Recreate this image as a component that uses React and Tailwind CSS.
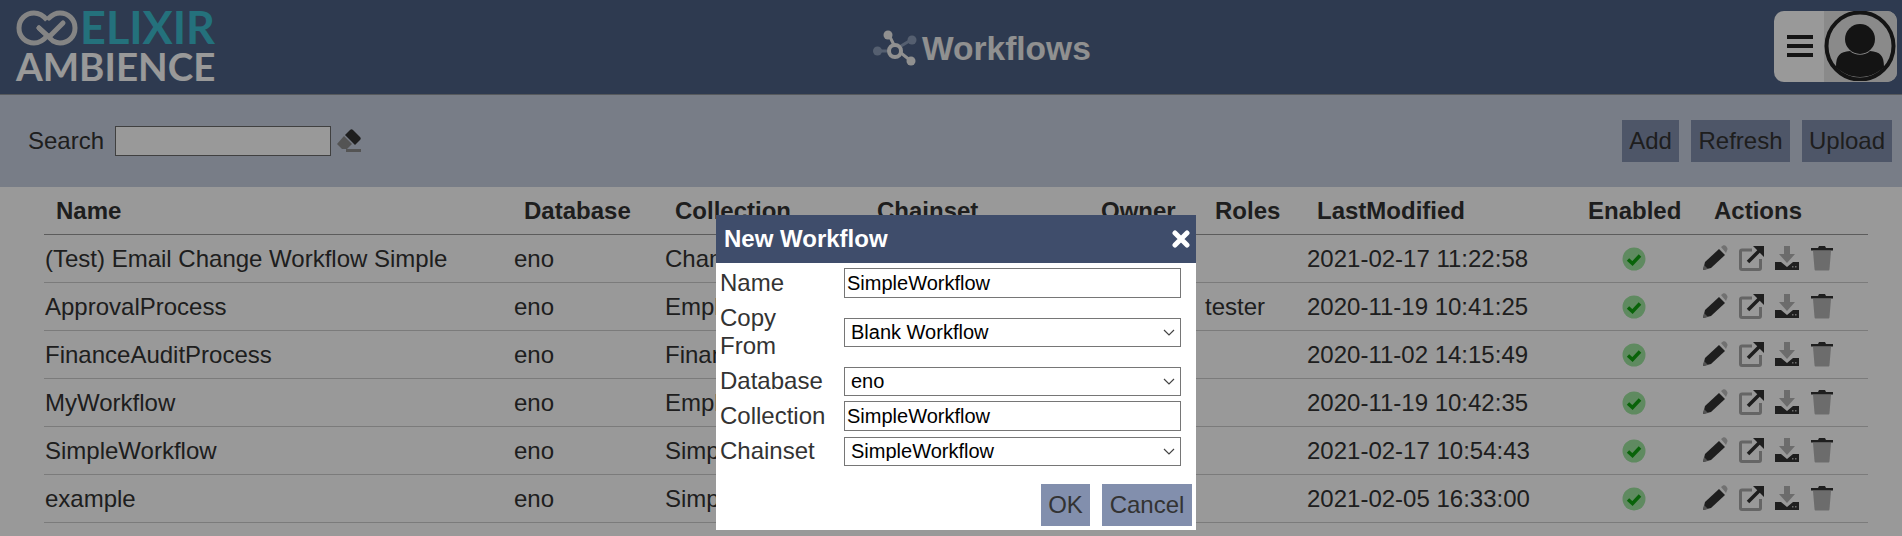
const workflows = [
  { name: "(Test) Email Change Workflow Simple", collection: "ChangeRequests", roles: "", modified: "2021-02-17 11:22:58" },
  { name: "ApprovalProcess", collection: "Employees", roles: "tester", modified: "2020-11-19 10:41:25" },
  { name: "FinanceAuditProcess", collection: "FinanceAudit", roles: "", modified: "2020-11-02 14:15:49" },
  { name: "MyWorkflow", collection: "Employees", roles: "", modified: "2020-11-19 10:42:35" },
  { name: "SimpleWorkflow", collection: "SimpleWorkflow", roles: "", modified: "2021-02-17 10:54:43" },
  { name: "example", collection: "SimpleWorkflow", roles: "", modified: "2021-02-05 16:33:00" },
]

function Logo() {
  return (
    <div className="flex flex-col pl-[16px] pt-[7px]">
      <div className="flex items-center h-[41px]">
        <svg width="62" height="38" viewBox="0 0 62 38" fill="none" stroke="#dcdcdc" strokeWidth="5">
          <path d="M31 11 C27 6 23 4 18 4 C10 4 3 10 3 19 C3 28 10 34 18 34 C23 34 27 32 31 27" />
          <path d="M23 19 L37 32 C39 33 41 34 44 34 C52 34 59 28 59 19 C59 10 52 4 44 4 C39 4 35 7 33 9" strokeLinecap="round" />
          <path d="M23 19 L33 28 L47 14" strokeLinecap="round" strokeLinejoin="round" />
        </svg>
        <span className="font-['Lato'] font-bold text-[45px] leading-none text-[#3cbccf] ml-[2px]">ELIXIR</span>
      </div>
      <span className="font-['Lato'] font-bold text-[38.5px] leading-none text-white -mt-[1px]">AMBIENCE</span>
    </div>
  )
}

function WorkflowIcon() {
  return (
    <svg width="46" height="38" viewBox="0 0 46 38" fill="none">
      <path d="M16 5 L23 19 L38 31" stroke="#f0f0f0" strokeWidth="3" />
      <path d="M6 21 H16 M28 16 L38 10" stroke="#8e9fbb" strokeWidth="3" />
      <circle cx="15" cy="5" r="4.5" fill="#f0f0f0" />
      <circle cx="38" cy="31" r="4.5" fill="#f0f0f0" />
      <circle cx="4.5" cy="21" r="4.5" fill="#8e9fbb" />
      <circle cx="39" cy="10" r="4.5" fill="#8e9fbb" />
      <circle cx="22" cy="21" r="6" stroke="#f0f0f0" strokeWidth="4" fill="#4e6285" />
    </svg>
  )
}

function Avatar() {
  return (
    <svg width="72" height="70" viewBox="0 0 72 70">
      <circle cx="36" cy="35" r="33.5" fill="#e6e6e6" stroke="#222" strokeWidth="4" />
      <circle cx="36" cy="28" r="15" fill="#222" />
      <path d="M12 56 C12 44 16 41 26 40 C31 45 41 45 46 40 C56 41 60 44 60 56 C54 62 46 66 36 66 C26 66 18 62 12 56 Z" fill="#222" />
    </svg>
  )
}

function Eraser() {
  return (
    <svg width="26" height="24" viewBox="0 0 26 24">
      <path d="M8 7 L16 15 L11 20 L6 20 L1 15 Z" fill="#8c8c8c" />
      <path d="M9 6 L14 1 C15 0 16 0 17 1 L24 8 C25 9 25 10 24 11 L19 16 Z" fill="#333" />
      <rect x="10" y="20" width="15" height="3" fill="#8c8c8c" />
    </svg>
  )
}

function EnabledIcon() {
  return (
    <svg width="24" height="24" viewBox="0 0 24 24">
      <circle cx="12" cy="12" r="11.5" fill="#9fe6a0" />
      <path d="M6 12.5 L10.5 16.5 L18 8.5" fill="none" stroke="#0fa60f" strokeWidth="3.5" />
    </svg>
  )
}

function ActionIcons() {
  return (
    <div className="flex items-center -mt-[2px]">
      <svg width="26" height="26" viewBox="0 0 26 26">
        <path d="M1 25 L3 17 L17 4 L23 10 L9 23 Z" fill="#333" />
        <path d="M19 2 L21 0.5 C22 0 23 0 24 1 L25 2.5 C25.7 3.5 25.7 4.5 25 5.5 L24 8 Z" fill="#bdbdbd" />
        <path d="M1 25 L2 20 L6 24 Z" fill="#8c8c8c" />
      </svg>
      <svg className="ml-[11px]" width="26" height="26" viewBox="0 0 26 26" fill="none">
        <path d="M13 5 H3 C2 5 1.5 5.5 1.5 6.5 V23 C1.5 24 2 24.5 3 24.5 H20 C21 24.5 21.5 24 21.5 23 V14" stroke="#a8a8a8" strokeWidth="3" />
        <path d="M9 17 L23 3" stroke="#333" strokeWidth="3.5" />
        <path d="M14 1 H25 V12 Z" fill="#333" />
      </svg>
      <svg className="ml-[9px]" width="26" height="26" viewBox="0 0 26 26">
        <path d="M10 1 H16 V9 H21 L13 18 L5 9 H10 Z" fill="#b5b5b5" />
        <path d="M1 17 H7 L13 22 L19 17 H25 V25 H1 Z" fill="#333" />
        <rect x="18" y="21" width="1.5" height="1.5" fill="#b5b5b5" />
        <rect x="21" y="21" width="1.5" height="1.5" fill="#b5b5b5" />
      </svg>
      <svg className="ml-[10px]" width="24" height="26" viewBox="0 0 24 26">
        <path d="M3 6 H21 L19.5 24 C19.4 25 19 25.5 18 25.5 H6 C5 25.5 4.6 25 4.5 24 Z" fill="#b5b5b5" />
        <path d="M1 3 H8 L9 1 H15 L16 3 H23 V5.5 H1 Z" fill="#333" />
      </svg>
    </div>
  )
}

function ModalField({ label, className, children }) {
  return (
    <div className={"flex items-center " + className}>
      <label className="w-[124px] shrink-0 leading-[28px]">{label}</label>
      {children}
    </div>
  )
}

function ModalSelect({ value }) {
  return (
    <div className="relative w-[337px]">
      <select defaultValue={value} className="block appearance-none w-full h-[29px] border border-[#767676] bg-white text-black text-[20px] leading-none pl-[6px]">
        <option>{value}</option>
      </select>
      <svg className="absolute right-[6px] top-[11px]" width="12" height="8" viewBox="0 0 12 8" fill="none" stroke="#444" strokeWidth="1.2">
        <path d="M1 1 L6 6 L11 1" />
      </svg>
    </div>
  )
}

export default function App() {
  return (
    <div className="relative h-[536px] w-[1902px] overflow-hidden bg-white text-[24px] text-[#333] font-['Liberation_Sans',sans-serif]">
      <header className="relative flex items-start justify-between h-[95px] bg-[#4e6285] border-b border-[#8f949c]">
        <Logo />
        <div className="absolute left-[873px] top-[30px] flex items-center">
          <WorkflowIcon />
          <span className="font-bold text-[33.5px] leading-[38px] text-[#f0f0f0] ml-[3px]">Workflows</span>
        </div>
        <div className="flex mt-[11px] mr-[5px] w-[123px] h-[71px] rounded-[10px] overflow-hidden bg-white">
          <div className="flex flex-col gap-[5px] items-start w-[50px] pl-[13px] pt-[24px]">
            <span className="block w-[26px] h-[4px] bg-[#222]" />
            <span className="block w-[26px] h-[4px] bg-[#222]" />
            <span className="block w-[26px] h-[4px] bg-[#222]" />
          </div>
          <div className="bg-[#e6e6e6] flex-1">
            <Avatar />
          </div>
        </div>
      </header>

      <div className="flex items-center justify-between h-[92px] bg-[#c8d0e1] pl-[28px] pr-[10px]">
        <div className="flex items-center">
          <span>Search</span>
          <input className="ml-[11px] w-[216px] h-[30px] border border-[#6b6b6b] bg-white" />
          <span className="ml-[5px]">
            <Eraser />
          </span>
        </div>
        <div className="flex gap-[12px]">
          <button className="h-[42px] w-[57px] bg-[#828fad]">Add</button>
          <button className="h-[42px] w-[99px] bg-[#828fad]">Refresh</button>
          <button className="h-[42px] w-[90px] bg-[#828fad]">Upload</button>
        </div>
      </div>

      <div className="ml-[44px] w-[1824px]">
        <div className="grid grid-cols-[468px_151px_202px_224px_114px_102px_271px_126px_166px] h-[48px] items-center font-bold border-b border-[#9a9a9a]">
          {["Name", "Database", "Collection", "Chainset", "Owner", "Roles", "LastModified", "Enabled", "Actions"].map((title) => (
            <div key={title} className="pl-[12px]">{title}</div>
          ))}
        </div>
        {workflows.map((item) => (
          <div key={item.name} className="grid grid-cols-[468px_151px_202px_224px_114px_102px_271px_126px_166px] h-[48px] items-center border-b border-[#cdcdcd]">
            <div className="pl-[1px]">{item.name}</div>
            <div className="pl-[2px]">eno</div>
            <div className="pl-[2px]">{item.collection}</div>
            <div />
            <div />
            <div className="pl-[2px]">{item.roles}</div>
            <div className="pl-[2px]">{item.modified}</div>
            <div className="flex justify-center pr-[10px]">
              <EnabledIcon />
            </div>
            <div>
              <ActionIcons />
            </div>
          </div>
        ))}
      </div>

      <div className="absolute inset-0 bg-black/40" />

      <div className="absolute left-[716px] top-[215px] w-[480px] h-[315px] bg-white">
        <div className="flex items-center justify-between h-[48px] bg-[#3f4d6b] pl-[8px] pr-[6px] text-white font-bold">
          <span>New Workflow</span>
          <svg width="18" height="18" viewBox="0 0 18 18" fill="none" stroke="white" strokeWidth="5" strokeLinecap="round">
            <path d="M3 3 L15 15 M15 3 L3 15" />
          </svg>
        </div>
        <div className="pl-[4px]">
          <ModalField label="Name" className="h-[34px] mt-[3px]">
            <input defaultValue="SimpleWorkflow" className="w-[337px] h-[30px] border border-[#767676] text-black text-[20px] pl-[2px]" />
          </ModalField>
          <ModalField label={<>Copy<br />From</>} className="h-[56px] mt-[4px]">
            <ModalSelect value="Blank Workflow" />
          </ModalField>
          <ModalField label="Database" className="h-[34px] mt-[4px]">
            <ModalSelect value="eno" />
          </ModalField>
          <ModalField label="Collection" className="h-[34px] mt-[1px]">
            <input defaultValue="SimpleWorkflow" className="w-[337px] h-[30px] border border-[#767676] text-black text-[20px] pl-[2px]" />
          </ModalField>
          <ModalField label="Chainset" className="h-[34px] mt-[1px]">
            <ModalSelect value="SimpleWorkflow" />
          </ModalField>
        </div>
        <div className="flex justify-end gap-[12px] mt-[16px] pr-[4px]">
          <button className="h-[42px] w-[49px] bg-[#828fad]">OK</button>
          <button className="h-[42px] w-[90px] bg-[#828fad]">Cancel</button>
        </div>
      </div>
    </div>
  )
}
